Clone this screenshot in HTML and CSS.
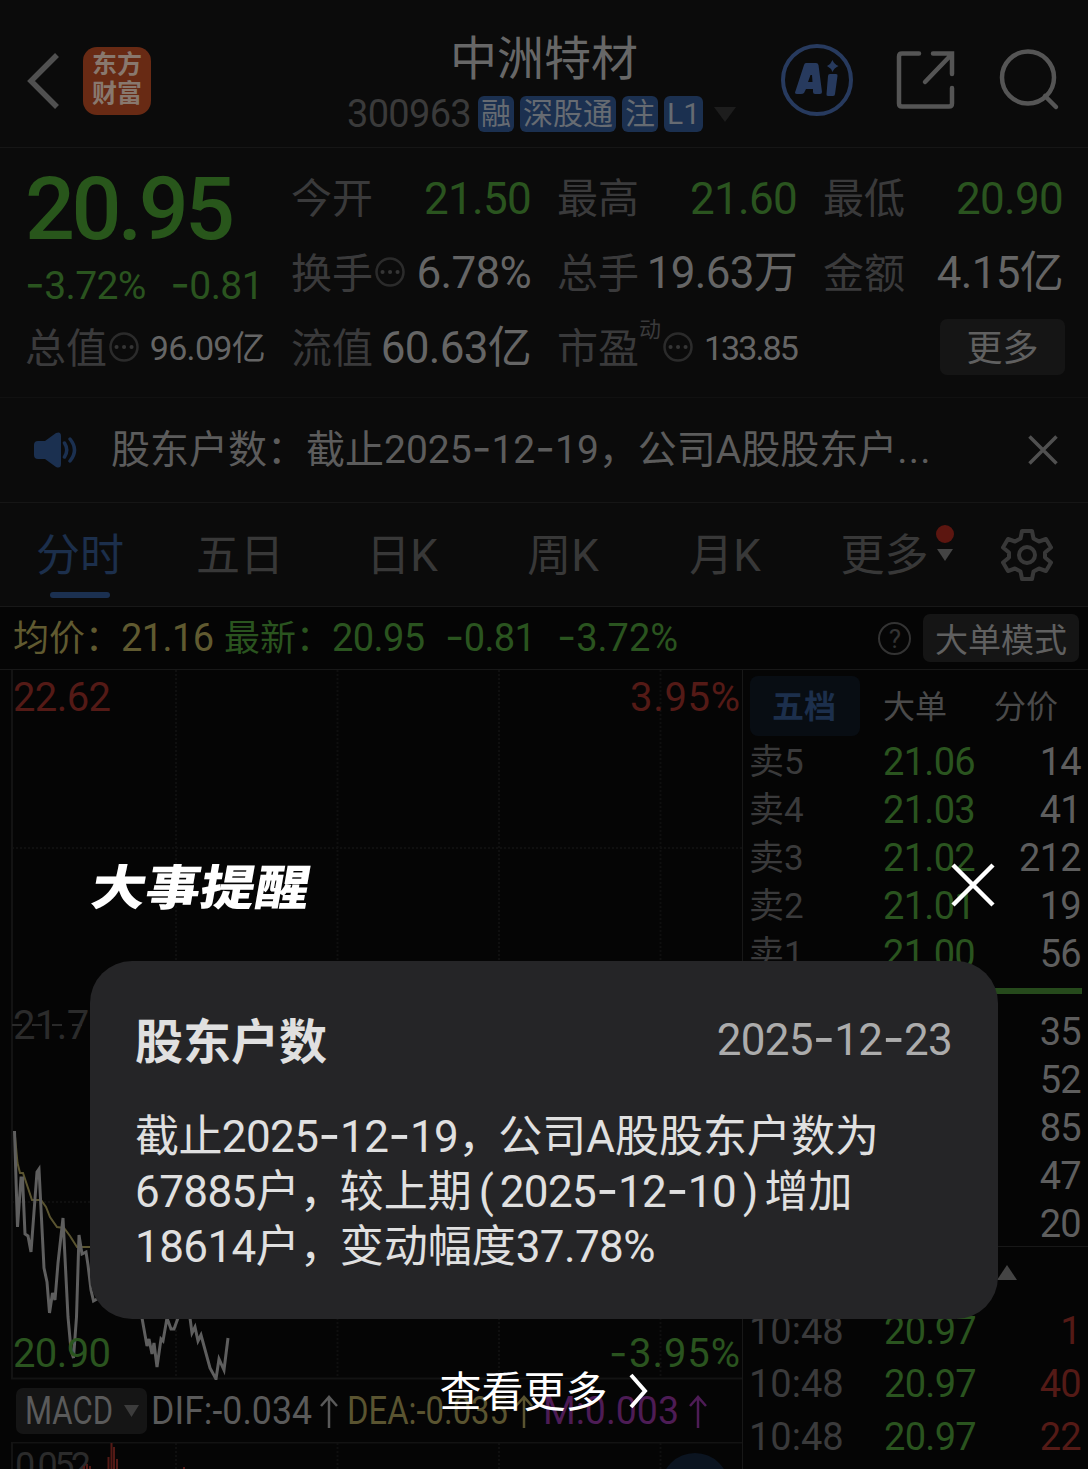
FILE: index.html
```html
<!DOCTYPE html>
<html lang="zh-CN">
<head>
    <meta charset="UTF-8">
    <meta name="viewport" content="width=device-width, initial-scale=1.0">
    <title>中洲特材 300963</title>
    <link rel="stylesheet" href="styles.css">
</head>
<body>
<div class="page">

    <!-- Header -->
    <header class="header">
        <div class="header-left">
            <svg class="back" width="34" height="56" viewBox="0 0 34 56"><path d="M31 2 L5 28 L31 54"/></svg>
            <div class="logo"><span>东方</span><span>财富</span></div>
        </div>
        <div class="header-title">
            <h1>中洲特材</h1>
            <div class="code-row">
                <span class="code">300963</span>
                <span class="badge">融</span>
                <span class="badge">深股通</span>
                <span class="badge">注</span>
                <span class="badge">L1</span>
                <svg class="caret" width="22" height="15" viewBox="0 0 22 15"><path d="M0 0H22L11 15Z"/></svg>
            </div>
        </div>
        <div class="header-icons">
            <svg width="72" height="72" viewBox="0 0 72 72">
                <circle class="ai-ring" cx="36" cy="36" r="34"/>
                <path class="ai-fill" d="M25 19H35Q37 19 37.500 21L41 48Q41 50 39 50H34Q32 50 32 48V45H25L23 49Q22 50 20 50H16Q13 50 14.500 47L23 21Q23.500 19 25 19ZM29.500 31L27 38H31.500L31 31Z"/>
                <path class="ai-fill" d="M49 30H55Q57 30 56.500 32L54 50Q54 52 52 52H47Q45 52 45.500 50L47 32Q47 30 49 30Z"/>
                <path class="ai-fill" d="M51.500 16Q53 20 57.500 22Q53 24 51.500 28Q50 24 46 22Q50 20 51.500 16Z"/>
            </svg>
            <svg class="line-icon" width="60" height="60" viewBox="0 0 60 60">
                <path d="M23 3.500H6Q3 3.500 3 6.500V53.500Q3 56.500 6 56.500H53Q56 56.500 56 53.500V38"/>
                <path d="M37 3.500H56V24M55 5L29 32"/>
            </svg>
            <svg class="line-icon" width="62" height="62" viewBox="0 0 62 62">
                <circle cx="29" cy="28.500" r="26"/><path d="M46 47L57 58"/>
            </svg>
        </div>
    </header>

    <!-- Quote -->
    <section class="quote">
        <div class="price-cell">
            <div class="price">20.95</div>
            <div class="change"><span><i class="dash">-</i>3.72%</span><span><i class="dash">-</i>0.81</span></div>
        </div>
        <div class="cell"><label>今开</label><b class="green">21.50</b></div>
        <div class="cell"><label>最高</label><b class="green">21.60</b></div>
        <div class="cell"><label>最低</label><b class="green">20.90</b></div>
        <div class="cell"><label>换手<svg class="dots" width="30" height="30" viewBox="0 0 30 30"><circle cx="15" cy="15" r="13.500"/><path d="M7.500 15h.1M15 15h.1M22.500 15h.1"/></svg></label><b>6.78%</b></div>
        <div class="cell"><label>总手</label><b>19.63万</b></div>
        <div class="cell"><label>金额</label><b>4.15亿</b></div>
        <div class="cell"><label>总值<svg class="dots" width="30" height="30" viewBox="0 0 30 30"><circle cx="15" cy="15" r="13.500"/><path d="M7.500 15h.1M15 15h.1M22.500 15h.1"/></svg></label><b class="small">96.09亿</b></div>
        <div class="cell"><label>流值</label><b>60.63亿</b></div>
        <div class="cell"><label>市盈<sup>动</sup><svg class="dots" width="30" height="30" viewBox="0 0 30 30"><circle cx="15" cy="15" r="13.500"/><path d="M7.500 15h.1M15 15h.1M22.500 15h.1"/></svg></label><b class="small ratio-pe">133.85</b></div>
        <div class="cell cell-more"><button class="more-btn">更多</button></div>
    </section>

    <!-- Notice -->
    <section class="notice">
        <svg class="speaker" width="46" height="38" viewBox="0 0 46 38">
            <path class="speaker-body" d="M5 10H12L23 2Q28 0 28 5V33Q28 38 23 36L12 28H5Q1 28 1 24V14Q1 10 5 10Z"/>
            <path class="speaker-wave" d="M31.500 12Q36 19 31.500 26M37 8Q46 19 37 30"/>
        </svg>
        <p>股东户数：截止2025<i class="dash">-</i>12<i class="dash">-</i>19，公司A股股东户<span class="more-dots">...</span></p>
        <svg class="notice-close" width="30" height="30" viewBox="0 0 30 30"><path d="M1.500 1.500L28.500 28.500M28.500 1.500L1.500 28.500"/></svg>
    </section>

    <!-- Period tabs -->
    <nav class="tabs">
        <span class="tab active">分时</span>
        <span class="tab">五日</span>
        <span class="tab">日K</span>
        <span class="tab">周K</span>
        <span class="tab">月K</span>
        <span class="tab tab-more">更多<svg width="18" height="44" viewBox="0 0 18 44"><circle cx="9" cy="9" r="9"/><path d="M1 24H17L9 36Z"/></svg></span>
        <svg class="gear" width="52" height="52" viewBox="0 0 52 52">
            <path d="M21 2H31L32.500 9.500L38 12.500L45 10L50 18.500L44 23.500V28.500L50 33.500L45 42L38 39.500L32.500 42.500L31 50H21L19.500 42.500L14 39.500L7 42L2 33.500L8 28.500V23.500L2 18.500L7 10L14 12.500L19.500 9.500Z"/>
            <circle cx="26" cy="26" r="8"/>
        </svg>
    </nav>

    <!-- Average / latest -->
    <section class="info">
        <span class="avg"><em>均价：</em>21.16</span>
        <span class="latest"><em>最新：</em>20.95</span>
        <span class="diff"><i class="dash">-</i>0.81</span>
        <span class="pct"><i class="dash">-</i>3.72%</span>
        <span class="help">?</span>
        <button class="mode-btn">大单模式</button>
    </section>

    <main class="market">
        <!-- Minute chart, x/y in chart pixels -->
        <div class="chart-col">
            <svg class="chart" width="742" height="710" viewBox="0 670 742 710">
                <path class="grid" d="M176 670V1378M337.500 670V1378M499 670V1378M660.500 670V1378M12 848H742M12 1202H742"/>
                <path class="frame" d="M12 670V1378.500H742"/>
                <path class="mid" d="M12 1025H742"/>
                <polyline class="avg-line" points="14.5,1131 17.5,1163 20,1173 23,1173 32,1200 41,1200 46,1207 50,1217 57,1227 64,1228 70,1236 77,1247 110,1247"/>
                <polyline class="price-line" points="14.5,1131 17.5,1227 21,1178 22.5,1178 25,1234 28,1236 31,1252 37,1172 39,1169 44,1268 47,1282 49.5,1313 52.5,1293 55,1300 58,1263 63,1218 68,1317 71,1350 73.5,1358 76.5,1317 79,1235 82,1254 86,1252 88,1265 91,1290 93.5,1301 97,1299 110,1270 125,1290 142,1318 147,1346 149,1339 152,1354 154,1343 157,1367 161,1339 163,1341 167,1318 171,1329 174,1329 178,1318 184,1300 190,1318 192,1333 195,1327 198,1341 201,1335 210,1368 216,1379 219,1359 224,1370 228,1338"/>
                <text class="t-red" x="13" y="711" textLength="98">22.62</text>
                <text class="t-red" x="630" y="711" textLength="110">3.95%</text>
                <text class="t-gray" x="13" y="1039" textLength="98">21.78</text>
                <text class="t-green" x="13" y="1367" textLength="98">20.90</text>
                <text class="t-green" x="629" y="1367" textLength="111">3.95%</text>
                <text class="t-green t-dash" x="609" y="1367">-</text>
            </svg>
            <div class="macd-row">
                <button class="macd-btn">
                    <svg width="131" height="46" viewBox="0 0 131 46">
                        <text x="9" y="36" textLength="88" lengthAdjust="spacingAndGlyphs">MACD</text>
                        <path d="M108 17H123L115.500 29Z"/>
                    </svg>
                </button>
                <svg class="macd-values" width="580" height="46" viewBox="0 0 580 46">
                    <g class="v-dif"><text x="4" y="36" textLength="161" lengthAdjust="spacingAndGlyphs">DIF:-0.034</text><path d="M182 40V9M174 18L182 9L190 18"/></g>
                    <g class="v-dea"><text x="200" y="36" textLength="161" lengthAdjust="spacingAndGlyphs">DEA:-0.035</text><path d="M377 40V9M369 18L377 9L385 18"/></g>
                    <g class="v-m"><text x="396" y="36" textLength="136" lengthAdjust="spacingAndGlyphs">M:0.003</text><path d="M551 40V9M543 18L551 9L559 18"/></g>
                </svg>
            </div>
            <svg class="sub-chart" width="742" height="27" viewBox="0 1442 742 27">
                <path class="grid" d="M176 1443V1469M337.500 1443V1469M499 1443V1469M660.500 1443V1469"/>
                <path class="frame" d="M12 1469V1442.500H742"/>
                <text class="t-dim" x="15" y="1478" textLength="76">0.052</text>
                <path class="bars" d="M84 1466V1469M87 1464V1469M90 1466V1469M108.500 1457V1469M111.500 1443V1469M114 1447V1469M117 1459V1469M184 1467V1469"/>
                <circle class="float-dot" cx="695" cy="1487" r="34"/>
            </svg>
        </div>

        <!-- Order book -->
        <aside class="book">
            <div class="book-tabs"><span class="on">五档</span><span>大单</span><span>分价</span></div>
            <div class="row"><span>卖5</span><b>21.06</b><i>14</i></div>
            <div class="row"><span>卖4</span><b>21.03</b><i>41</i></div>
            <div class="row"><span>卖3</span><b>21.02</b><i>212</i></div>
            <div class="row"><span>卖2</span><b>21.01</b><i>19</i></div>
            <div class="row"><span>卖1</span><b>21.00</b><i>56</i></div>
            <div class="ratio"></div>
            <div class="row"><i>35</i></div>
            <div class="row"><i>52</i></div>
            <div class="row"><i>85</i></div>
            <div class="row"><i>47</i></div>
            <div class="row"><i>20</i></div>
            <div class="fold"><svg width="20" height="15" viewBox="0 0 20 15"><path d="M0 15H20L10 0Z"/></svg></div>
            <div class="tick"><span>10:48</span><b>20.97</b><i>1</i></div>
            <div class="tick"><span>10:48</span><b>20.97</b><i>40</i></div>
            <div class="tick"><span>10:48</span><b>20.97</b><i>22</i></div>
        </aside>
    </main>

    <!-- Reminder dialog -->
    <div class="dialog">
        <div class="dialog-head">
            <h2>大事提醒</h2>
            <svg width="44" height="44" viewBox="0 0 44 44"><path d="M2 2L42 42M42 2L2 42"/></svg>
        </div>
        <div class="card">
            <div class="card-head">
                <h3>股东户数</h3>
                <time>2025<i class="dash">-</i>12<i class="dash">-</i>23</time>
            </div>
            <p><span class="num">截止2025<i class="dash">-</i>12<i class="dash">-</i>19<span class="comma">，</span></span>公司A股股东户数为<br><span class="num">67885</span>户<span class="comma">，</span>较上期<span class="paren">(</span><span class="num">2025<i class="dash">-</i>12<i class="dash">-</i>10</span><span class="paren">)</span>增加<br><span class="num">18614</span>户<span class="comma">，</span>变动幅度<span class="num">37.78%</span></p>
        </div>
        <div class="dialog-more">
            <span>查看更多</span>
            <svg width="20" height="36" viewBox="0 0 20 36"><path d="M2 2L16 18L2 34"/></svg>
        </div>
    </div>

</div>
</body>
</html>
```
FILE: styles.css
```css
* {
    box-sizing: border-box;
}

body {
    margin: 0;
    background: #050505;
    font-family: Roboto, "Noto Sans CJK SC", sans-serif;
    color: #656565;
}

.page {
    position: relative;
    width: 1088px;
    height: 1469px;
    overflow: hidden;
}

h1, h2, h3, p {
    margin: 0;
    font-weight: 400;
}

b, i, em {
    font-weight: 400;
    font-style: normal;
}

button {
    border: none;
    padding: 0;
    font-family: inherit;
    color: #606060;
    background: #151515;
    border-radius: 7px;
}

svg {
    fill: none;
    flex-shrink: 0;
}

.dash {
    font-family: Inter, sans-serif;
    font-size: 1.1em;
    line-height: 0;
}

/* Header */
.header {
    display: grid;
    grid-template-columns: 347px 1fr 308px;
    height: 148px;
    background: #0b0b0b;
    border-bottom: 1px solid #161616;
}

.header-left {
    display: flex;
    align-items: center;
    gap: 23px;
    padding: 14px 0 0 26px;
}

.back {
    stroke: #505050;
    stroke-width: 5.5;
}

.logo {
    display: flex;
    flex-direction: column;
    justify-content: center;
    width: 68px;
    height: 68px;
    padding-bottom: 3px;
    border-radius: 14px;
    background: #682a14;
    color: #88786e;
    font-size: 25px;
    font-weight: 700;
    line-height: 29px;
    text-align: center;
}

.header-title {
    display: flex;
    flex-direction: column;
}

.header-title h1 {
    padding-left: 103px;
    margin-top: 30px;
    font-size: 47px;
    line-height: 58px;
    color: #676767;
}

.code-row {
    display: flex;
    align-items: center;
    gap: 6px;
    margin-top: 6px;
}

.code {
    width: 125px;
    font-size: 38px;
    line-height: 40px;
    letter-spacing: -0.7px;
    color: #3a3a3a;
}

.badge {
    height: 36px;
    padding: 0 3px;
    border-radius: 6px;
    background: #1b3050;
    color: #666b72;
    font-size: 30px;
    line-height: 35px;
    white-space: nowrap;
}

.caret {
    margin-left: 5px;
    fill: #1d1d1d;
}

.header-icons {
    display: flex;
    align-items: center;
    gap: 43px;
    padding: 12px 0 0 1px;
}

.ai-ring {
    stroke: #273a5e;
    stroke-width: 4;
}

.ai-fill {
    fill: #273a5e;
    fill-rule: evenodd;
}

.line-icon {
    stroke: #555;
    stroke-width: 4.5;
    stroke-linecap: round;
}

/* Quote */
.quote {
    display: grid;
    grid-template-columns: repeat(4, 240px);
    grid-template-rows: repeat(3, 75px);
    column-gap: 26px;
    height: 250px;
    padding: 13px 0 0 25px;
    background: #0b0b0b;
    border-bottom: 1px solid #111;
}

.price-cell {
    grid-row: 1 / 3;
}

.price {
    margin-top: 3px;
    font-size: 88px;
    font-weight: 500;
    line-height: 90px;
    letter-spacing: -3.6px;
    color: #28561b;
}

.change {
    display: flex;
    justify-content: space-between;
    width: 238px;
    margin-top: 11px;
    font-size: 39px;
    line-height: 42px;
    letter-spacing: -0.6px;
    color: #2a541f;
}

.cell {
    display: flex;
    align-items: center;
    justify-content: space-between;
    height: 75px;
    white-space: nowrap;
}

.cell label {
    display: flex;
    align-items: center;
    height: 75px;
    font-size: 41px;
    line-height: 72px;
    color: #3a3a3b;
}

.cell b {
    height: 75px;
    font-size: 44px;
    line-height: 75px;
    letter-spacing: -0.7px;
    color: #656565;
}

.cell b.green {
    line-height: 77px;
    color: #2a541f;
}

.cell b.small {
    font-size: 34px;
    line-height: 74px;
}

.cell b.ratio-pe {
    letter-spacing: -1.9px;
}

.cell sup {
    align-self: flex-start;
    margin-top: 6px;
    font-size: 22px;
    line-height: 26px;
}

.dots {
    margin: -3px 0 0 2px;
    stroke: #2b2b2b;
    stroke-width: 2.5;
}

.dots path {
    stroke: #353535;
    stroke-width: 4;
    stroke-linecap: round;
}

.cell-more {
    justify-content: flex-end;
}

.more-btn {
    width: 125px;
    height: 56px;
    margin: 0 -2px 4px 0;
    padding-bottom: 5px;
    font-size: 36px;
}

/* Notice */
.notice {
    display: flex;
    align-items: center;
    height: 105px;
    padding: 0 30px 0 33px;
    background: #0b0b0b;
    border-bottom: 1px solid #161616;
}

.speaker-body {
    fill: #1b3050;
}

.speaker-wave {
    stroke: #1b3050;
    stroke-width: 3.5;
    stroke-linecap: round;
}

.notice p {
    flex: 1;
    margin-left: 32px;
    font-size: 39px;
    line-height: 60px;
    white-space: nowrap;
    color: #5c5c5c;
}

.more-dots {
    letter-spacing: 1.2px;
}

.notice-close {
    stroke: #505050;
    stroke-width: 3.5;
}

/* Tabs */
.tabs {
    display: grid;
    grid-template-columns: 160px 160px 164px 158px 166px 178px 1fr;
    align-items: center;
    height: 104px;
    background: #0b0b0b;
    border-bottom: 1px solid #181818;
}

.tab {
    height: 103px;
    padding-top: 3px;
    font-size: 44px;
    line-height: 101px;
    text-align: center;
    color: #383838;
}

.tab.active {
    color: #1c2f4c;
}

.tab.active::after {
    content: "";
    display: block;
    width: 60px;
    height: 6px;
    margin: -15px auto 0;
    border-radius: 3px;
    background: #1b3050;
}

.tab-more {
    display: flex;
    align-items: center;
    justify-content: center;
    gap: 7px;
}

.tab-more svg {
    margin-bottom: 18px;
}

.tab-more circle {
    fill: #5c1610;
}

.tab-more path {
    fill: #444;
}

.gear {
    margin-left: 15px;
    stroke: #383838;
    stroke-width: 4;
    stroke-linejoin: round;
}

/* Info bar */
.info {
    display: flex;
    align-items: center;
    height: 63px;
    padding: 0 9px 0 13px;
    border-bottom: 1px solid #181818;
    font-size: 38px;
    line-height: 60px;
    letter-spacing: -0.6px;
    white-space: nowrap;
    color: #2a541f;
}

.info em {
    display: inline-block;
    width: 108px;
    font-size: 36px;
    letter-spacing: 0;
}

.avg {
    width: 211px;
    color: #605a30;
}

.latest {
    width: 221px;
}

.diff {
    width: 112px;
}

.diff, .pct {
    line-height: 62px;
}

.pct {
    letter-spacing: 0;
}

.help {
    width: 33px;
    height: 33px;
    margin-left: auto;
    border: 2px solid #333;
    border-radius: 50%;
    font-size: 26px;
    line-height: 30px;
    text-align: center;
    color: #333;
}

.mode-btn {
    width: 156px;
    height: 48px;
    margin-left: 12px;
    font-size: 33px;
    padding-bottom: 2px;
}

/* Market */
.market {
    display: grid;
    grid-template-columns: 742px 346px;
}

.chart-col {
    display: flex;
    flex-direction: column;
}

.chart, .sub-chart {
    display: block;
    font-size: 40px;
}

.grid {
    stroke: #0f0f0f;
    stroke-width: 2;
    stroke-dasharray: 2 2;
}

.frame {
    stroke: #131313;
    stroke-width: 2;
}

.mid {
    stroke: #2a2a2a;
    stroke-width: 2;
    stroke-dasharray: 10 10;
}

.avg-line {
    stroke: #5a5430;
    stroke-width: 2;
}

.price-line {
    stroke: #5e5e5e;
    stroke-width: 3;
}

.t-red {
    fill: #541a16;
}

.t-green {
    fill: #2a541f;
}

.t-gray, .t-dim {
    fill: #2b2b2b;
}

.t-dash {
    font-family: Inter, sans-serif;
}

.t-dim {
    font-size: 36px;
}

.macd-row {
    display: flex;
    align-items: center;
    height: 62px;
    padding: 0 0 1px 16px;
    font-size: 38px;
}

.macd-btn {
    height: 46px;
    font-size: 38px;
}

.macd-btn svg {
    display: block;
    fill: #5a5a5a;
}

.macd-btn path {
    fill: #3c3c3c;
}

.macd-values path {
    stroke-width: 2.5;
}

.v-dif text {
    fill: #5a5a5a;
}

.v-dif path {
    stroke: #5a5a5a;
}

.v-dea text {
    fill: #5a5430;
}

.v-dea path {
    stroke: #5a5430;
}

.v-m text {
    fill: #4d1c55;
}

.v-m path {
    stroke: #4d1c55;
}

.bars {
    stroke: #541a16;
    stroke-width: 2;
}

.float-dot {
    fill: #0b1420;
}

/* Order book */
.book {
    height: 799px;
    overflow: hidden;
    border-left: 1px solid #181818;
    font-size: 38px;
}

.book-tabs {
    display: grid;
    grid-template-columns: 110px 110px 112px;
    height: 60px;
    margin: 6px 0 2px 7px;
    font-size: 32px;
    line-height: 58px;
    text-align: center;
    color: #4a4a4a;
}

.book-tabs span {
    height: 60px;
    padding-top: 2px;
}

.book-tabs .on {
    padding-right: 2px;
    border-radius: 8px;
    background: #080d13;
    font-weight: 700;
    color: #1c2f4c;
}

.row, .tick {
    display: grid;
    grid-template-columns: 100px 125px 1fr;
    align-items: center;
    height: 48px;
    padding: 0 7px 0 6px;
    line-height: 48px;
}

.row span, .tick span {
    color: #3a3a3b;
}

.row span {
    height: 48px;
    font-size: 35px;
    line-height: 50px;
}

.row b, .tick b {
    margin-right: -1px;
    text-align: right;
    letter-spacing: -0.7px;
    color: #2a541f;
}

.row i, .tick i {
    grid-column: 3;
    text-align: right;
    letter-spacing: -0.7px;
    color: #5e5e5e;
}

.ratio {
    height: 6px;
    margin: 10px 6px 14px 7px;
    background: #264a1c;
}

.fold {
    display: flex;
    justify-content: flex-end;
    height: 59px;
    margin-top: -2px;
    padding: 18px 71px 0 0;
    border-top: 1px solid #181818;
}

.fold svg {
    fill: #444;
}

.tick {
    height: 53px;
    line-height: 53px;
}

.tick b {
    margin-right: -2px;
}

.tick i {
    color: #541a16;
}

/* Dialog, lies over the page */
.dialog {
    position: absolute;
    left: 90px;
    top: 861px;
    width: 908px;
}

.dialog-head {
    display: flex;
    justify-content: space-between;
    height: 100px;
    padding: 2px 3px 0 2px;
}

.dialog-head h2 {
    height: 50px;
    font-size: 54.5px;
    font-weight: 900;
    line-height: 50px;
    color: #fff;
    transform: skewX(-10deg) scaleY(0.88);
}

.dialog-head svg {
    stroke: #fff;
    stroke-width: 4.5;
}

.card {
    height: 358px;
    padding: 45px 46px 45px 45px;
    border-radius: 42px;
    background: #252527;
    color: #e0e0e0;
}

.card-head {
    display: flex;
    justify-content: space-between;
    align-items: center;
    height: 64px;
}

.card-head h3 {
    font-size: 48px;
    font-weight: 700;
}

.card-head time {
    padding-top: 4px;
    font-size: 44px;
    letter-spacing: -0.7px;
    color: #acacac;
}

.card p {
    margin-top: 40px;
    font-size: 44px;
    line-height: 55px;
    white-space: nowrap;
}

.num {
    letter-spacing: -0.6px;
}

.comma {
    letter-spacing: -4px;
}

.paren {
    margin: 0 6px 0 7px;
}

.dialog-more {
    display: flex;
    align-items: center;
    justify-content: center;
    gap: 21px;
    height: 60px;
    margin-top: 42px;
    font-size: 42px;
    color: #fff;
}

.dialog-more span {
    padding-bottom: 6px;
}

.dialog-more svg {
    stroke: #fff;
    stroke-width: 4;
}
```
